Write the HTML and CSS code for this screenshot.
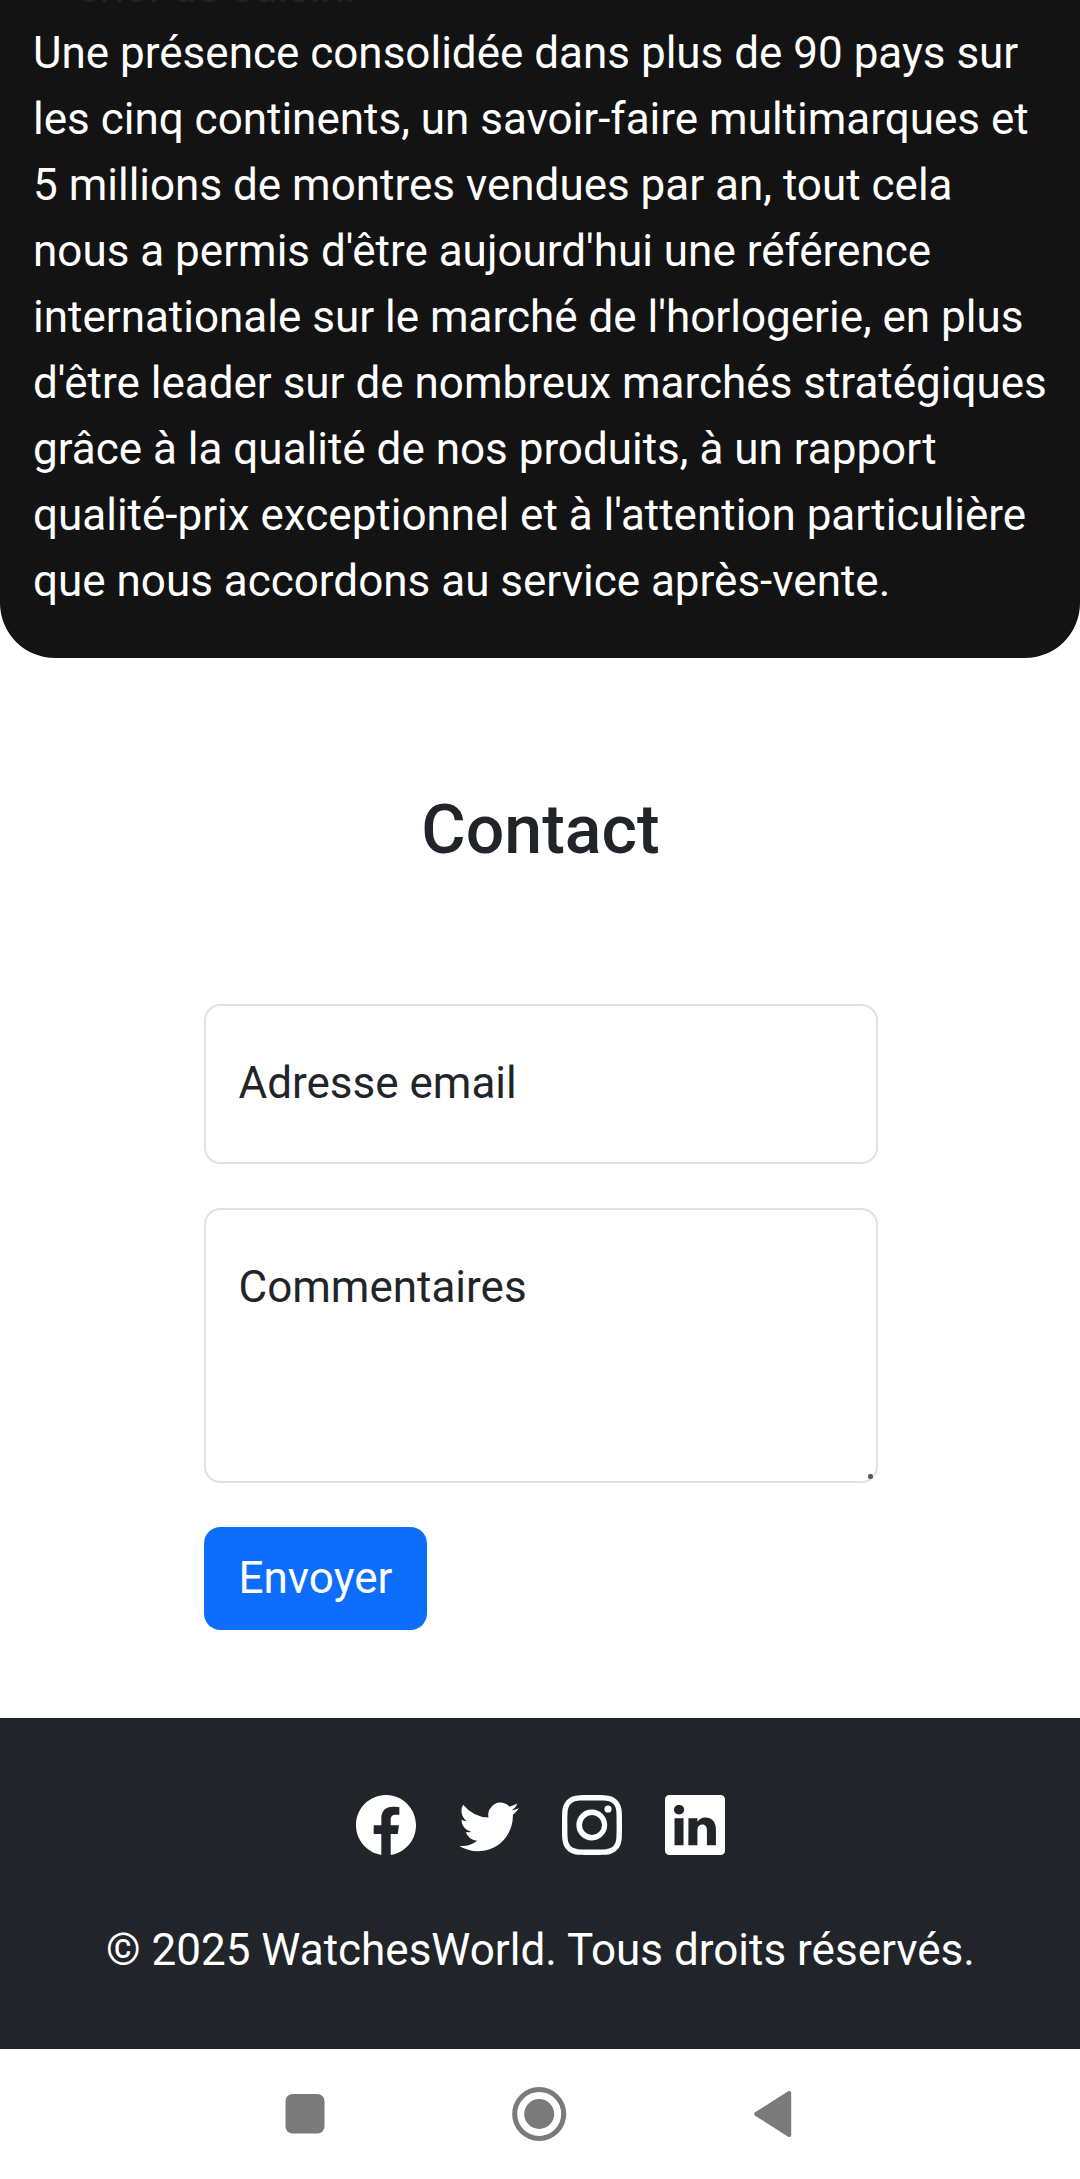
FILE: index.html
```html
<!DOCTYPE html>
<html lang="fr">
<head>
<meta charset="utf-8">
<title>WatchesWorld</title>
<link rel="stylesheet" href="styles.css">
</head>
<body>
<section class="about">
  <div class="about-heading">chef de cuisin.</div>
  <p class="about-text">Une présence consolidée dans plus de 90 pays sur les cinq continents, un savoir-faire multimarques et 5 millions de montres vendues par an, tout cela nous a permis d'être aujourd'hui une référence internationale sur le marché de l'horlogerie, en plus d'être leader sur de nombreux marchés stratégiques grâce à la qualité de nos produits, à un rapport qualité-prix exceptionnel et à l'attention particulière que nous accordons au service après-vente.</p>
</section>
<main class="contact">
  <h2 class="contact-title">Contact</h2>
  <form class="contact-form">
    <label class="field field-email">Adresse email</label>
    <label class="field field-comments">Commentaires<span class="grip"></span></label>
    <button class="submit" type="button">Envoyer</button>
  </form>
</main>
<footer class="footer">
  <div class="socials">
    <svg class="icon" viewBox="0 0 16 16"><path d="M16 8.049c0-4.446-3.582-8.05-8-8.05C3.58 0-.002 3.603-.002 8.05c0 4.017 2.926 7.347 6.75 7.951v-5.625h-2.03V8.05H6.75V6.275c0-2.017 1.195-3.131 3.022-3.131.876 0 1.791.157 1.791.157v1.98h-1.009c-.993 0-1.303.621-1.303 1.258v1.51h2.218l-.354 2.326H9.25V16c3.824-.604 6.75-3.934 6.75-7.951"/></svg>
    <svg class="icon" viewBox="0 0 16 16"><path d="M5.026 15c6.038 0 9.341-5.003 9.341-9.334q.002-.211-.006-.422A6.7 6.7 0 0 0 16 3.542a6.7 6.7 0 0 1-1.889.518 3.3 3.3 0 0 0 1.447-1.817 6.5 6.5 0 0 1-2.087.793A3.286 3.286 0 0 0 7.875 6.03a9.32 9.32 0 0 1-6.767-3.429 3.29 3.29 0 0 0 1.018 4.382A3.3 3.3 0 0 1 .64 6.575v.045a3.29 3.29 0 0 0 2.632 3.218 3.2 3.2 0 0 1-.865.115 3 3 0 0 1-.614-.057 3.28 3.28 0 0 0 3.067 2.277A6.6 6.6 0 0 1 .78 13.58a6 6 0 0 1-.78-.045A9.34 9.34 0 0 0 5.026 15"/></svg>
    <svg class="icon" viewBox="0 0 16 16"><path d="M8 0C5.829 0 5.556.01 4.703.048 3.85.088 3.269.222 2.76.42a3.9 3.9 0 0 0-1.417.923A3.9 3.9 0 0 0 .42 2.76C.222 3.268.087 3.85.048 4.7.01 5.555 0 5.827 0 8.001c0 2.172.01 2.444.048 3.297.04.852.174 1.433.372 1.942.205.526.478.972.923 1.417.444.445.89.719 1.416.923.51.198 1.09.333 1.942.372C5.555 15.99 5.827 16 8 16s2.444-.01 3.298-.048c.851-.04 1.434-.174 1.943-.372a3.9 3.9 0 0 0 1.416-.923c.445-.445.718-.891.923-1.417.197-.509.332-1.09.372-1.942C15.99 10.445 16 10.173 16 8s-.01-2.445-.048-3.299c-.04-.851-.175-1.433-.372-1.941a3.9 3.9 0 0 0-.923-1.417A3.9 3.9 0 0 0 13.24.42c-.51-.198-1.092-.333-1.943-.372C10.443.01 10.172 0 7.998 0zm-.717 1.442h.718c2.136 0 2.389.007 3.232.046.78.035 1.204.166 1.486.275.373.145.64.319.92.599s.453.546.598.92c.11.281.24.705.275 1.485.039.843.047 1.096.047 3.231s-.008 2.389-.047 3.232c-.035.78-.166 1.203-.275 1.485a2.5 2.5 0 0 1-.599.919c-.28.28-.546.453-.92.598-.28.11-.704.24-1.485.276-.843.038-1.096.047-3.232.047s-2.39-.009-3.233-.047c-.78-.036-1.203-.166-1.485-.276a2.5 2.5 0 0 1-.92-.598 2.5 2.5 0 0 1-.6-.92c-.109-.281-.24-.705-.275-1.485-.038-.843-.046-1.096-.046-3.233s.008-2.388.046-3.231c.036-.78.166-1.204.276-1.486.145-.373.319-.64.599-.92s.546-.453.92-.598c.282-.11.705-.24 1.485-.276.738-.034 1.024-.044 2.515-.045zm4.988 1.328a.96.96 0 1 0 0 1.92.96.96 0 0 0 0-1.92m-4.27 1.122a4.109 4.109 0 1 0 0 8.217 4.109 4.109 0 0 0 0-8.217m0 1.441a2.667 2.667 0 1 1 0 5.334 2.667 2.667 0 0 1 0-5.334"/></svg>
    <svg class="icon" viewBox="0 0 16 16"><path d="M0 1.146C0 .513.526 0 1.175 0h13.65C15.474 0 16 .513 16 1.146v13.708c0 .633-.526 1.146-1.175 1.146H1.175C.526 16 0 15.487 0 14.854zm4.943 12.248V6.169H2.542v7.225zm-1.2-8.212c.837 0 1.358-.554 1.358-1.248-.015-.709-.52-1.248-1.342-1.248S2.4 3.226 2.4 3.934c0 .694.521 1.248 1.327 1.248zm4.908 8.212V9.359c0-.216.016-.432.08-.586.173-.431.568-.878 1.232-.878.869 0 1.216.662 1.216 1.634v3.865h2.401V9.25c0-2.22-1.184-3.252-2.764-3.252-1.274 0-1.845.7-2.165 1.193v.025h-.016l.016-.025V6.169h-2.4c.03.678 0 7.225 0 7.225z"/></svg>
  </div>
  <p class="copyright">© 2025 WatchesWorld. Tous droits réservés.</p>
</footer>
<nav class="navbar">
  <svg class="nav-icon" viewBox="0 0 60 60"><rect x="9.5" y="10" width="39" height="39.5" rx="7"/></svg>
  <svg class="nav-icon" viewBox="0 0 60 60"><circle class="ring" cx="29.2" cy="30" r="24.5"/><circle cx="29.2" cy="30" r="15"/></svg>
  <svg class="nav-icon" viewBox="0 0 60 60"><path class="back" d="M12.2 30 L45.2 9 V51 Z"/></svg>
</nav>
</body>
</html>
```

FILE: styles.css
```css
* { box-sizing: border-box; }

body {
  margin: 0;
  background: #fff;
  color: #212529;
  font: 400 44px/66px Roboto, sans-serif;
}

.about {
  height: 658px;
  overflow: hidden;
  background: #131313;
  border-radius: 0 0 55px 55px;
}

.about-heading {
  height: 66px;
  margin-top: -46px;
  padding-left: 77px;
  letter-spacing: -0.3px;
}

.about-text {
  margin: 0;
  padding: 0 33px;
  color: #fff;
}

.contact {
  height: 1060px;
  padding-top: 131px;
}

.contact-title {
  margin: 0 0 133px;
  padding-left: 1px;
  font-size: 68px;
  font-weight: 500;
  line-height: 82px;
  text-align: center;
}

.contact-form {
  display: flex;
  flex-direction: column;
  align-items: flex-start;
  gap: 44px;
  width: 674px;
  margin-left: 204px;
}

.field {
  position: relative;
  width: 100%;
  height: 160px;
  padding: 44px 32.5px;
  border: 2px solid #dee2e6;
  border-radius: 16.5px;
}

.field-comments { height: 275px; }

.grip {
  position: absolute;
  right: 3px;
  bottom: 2px;
  width: 5px;
  height: 5px;
  border-radius: 2px;
  background: #55595d;
}

.submit {
  width: 223px;
  height: 103px;
  padding: 0 0 2px;
  border: 0;
  border-radius: 16.5px;
  background: #0d6efd;
  color: #fff;
  font: inherit;
  text-align: center;
}

.footer {
  height: 331px;
  padding-top: 77px;
  background: #212529;
  color: #fff;
}

.socials {
  display: flex;
  justify-content: center;
  gap: 43.3px;
  padding-left: 1px;
}

.icon {
  width: 60px;
  height: 60px;
  fill: currentColor;
}

.copyright {
  margin: 62px 0 0;
  padding-left: 1px;
  text-align: center;
}

.navbar {
  display: flex;
  justify-content: center;
  gap: 174px;
  height: 130px;
  padding-top: 35px;
}

.nav-icon {
  width: 60px;
  height: 60px;
  fill: #7a7a7a;
}

.ring {
  fill: none;
  stroke: #7a7a7a;
  stroke-width: 5;
}

.back {
  stroke: #7a7a7a;
  stroke-width: 4;
  stroke-linejoin: round;
}
```
